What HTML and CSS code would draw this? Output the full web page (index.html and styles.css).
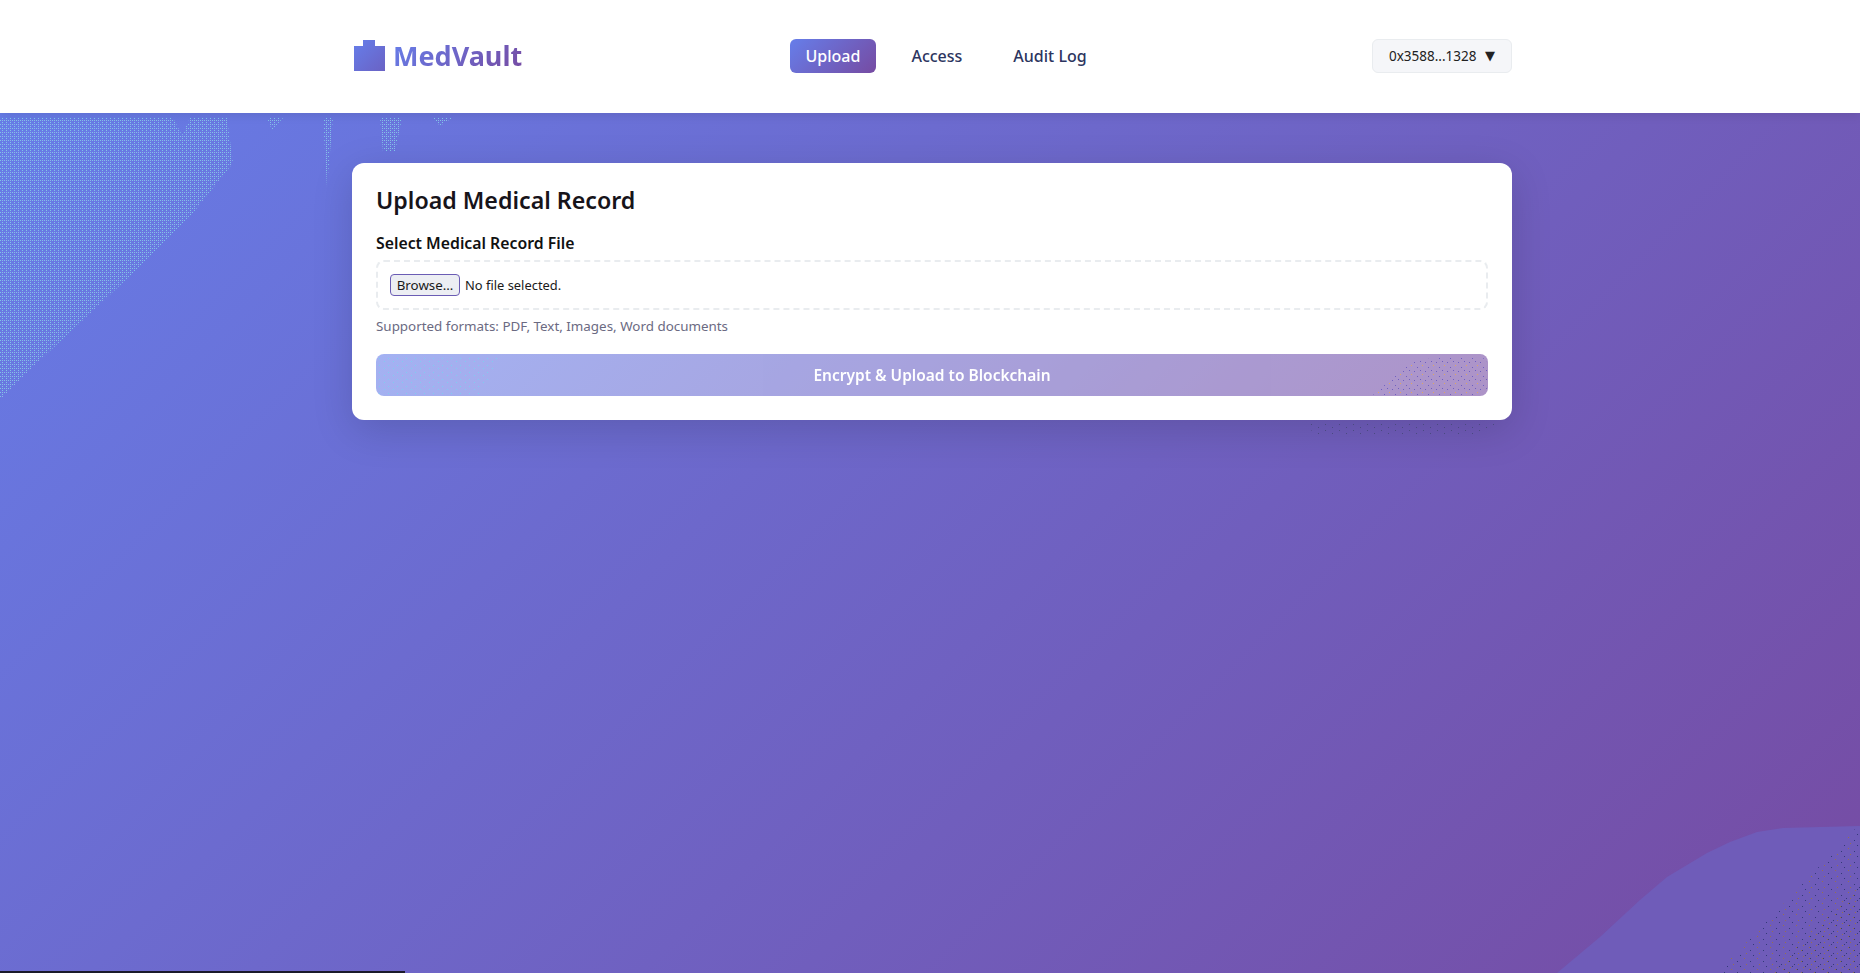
FILE: index.html
```html
<!DOCTYPE html>
<html lang="en">
<head>
    <meta charset="UTF-8">
    <title>MedVault</title>
    <link rel="stylesheet" href="styles.css">
</head>
<body>
    <header class="header">
        <div class="header_in">
            <a class="logo">
                <svg class="logo_icon" width="32" height="32" viewBox="0 0 32 32">
                    <defs>
                        <linearGradient id="logoGrad" x1="0" y1="0" x2="1" y2="1">
                            <stop offset="0" stop-color="#667eea"/>
                            <stop offset="1" stop-color="#6a62c4"/>
                        </linearGradient>
                    </defs>
                    <path d="M0 6H9V0H21V6H31V31H0Z" fill="url(#logoGrad)"/>
                </svg>
                <span class="logo_text">MedVault</span>
            </a>
            <nav class="nav">
                <a class="nav_item current">Upload</a>
                <a class="nav_item">Access</a>
                <a class="nav_item">Audit Log</a>
            </nav>
            <div class="wallet">
                <span>0x3588...1328</span>
                <span class="wallet_arrow">▼</span>
            </div>
        </div>
    </header>

    <main class="main">
        <section class="card">
            <h2 class="card_title">Upload Medical Record</h2>
            <label class="field_label">Select Medical Record File</label>
            <div class="file_box">
                <button class="browse" type="button">Browse…</button>
                <span class="file_name">No file selected.</span>
            </div>
            <p class="hint">Supported formats: PDF, Text, Images, Word documents</p>
            <button class="submit" type="button">Encrypt &amp; Upload to Blockchain</button>
        </section>
    </main>

    <!-- speckle and patches that sit over the page -->
    <svg class="speckle" width="1860" height="973" viewBox="0 0 1860 973">
        <defs>
            <pattern id="dotsCyan" width="4" height="4" patternUnits="userSpaceOnUse">
                <rect x="0" y="0" width="1" height="1" fill="#7fc4e6"/>
                <rect x="2" y="2" width="1" height="1" fill="#7fc4e6"/>
                <rect x="2" y="0" width="1" height="1" fill="#8fb4ea"/>
            </pattern>
            <pattern id="dotsPale" width="9" height="7" patternUnits="userSpaceOnUse">
                <rect x="1" y="1" width="1" height="1" fill="#7fcdf0"/>
                <rect x="6" y="4" width="1" height="1" fill="#7fcdf0"/>
            </pattern>
            <pattern id="dotsWarm" width="11" height="9" patternUnits="userSpaceOnUse">
                <rect x="1" y="1" width="1" height="1" fill="#6f5fc0"/>
                <rect x="6" y="2" width="1" height="1" fill="#6f5fc0"/>
                <rect x="3" y="5" width="1" height="1" fill="#e0a860"/>
                <rect x="9" y="7" width="1" height="1" fill="#6f5fc0"/>
            </pattern>
            <pattern id="dotsCorner" width="13" height="11" patternUnits="userSpaceOnUse">
                <rect x="2" y="1" width="1" height="1" fill="#96704f"/>
                <rect x="8" y="4" width="1" height="1" fill="#343a78"/>
                <rect x="4" y="7" width="1" height="1" fill="#96704f"/>
                <rect x="11" y="9" width="1" height="1" fill="#343a78"/>
            </pattern>
            <pattern id="dotsDark" width="14" height="6" patternUnits="userSpaceOnUse">
                <rect x="2" y="1" width="1" height="1" fill="#4a4a80"/>
                <rect x="9" y="4" width="1" height="1" fill="#4a4a80"/>
            </pattern>
        </defs>
        <path fill="url(#dotsCyan)" d="M0 118H173L182 135L190 118H227L233 163L213 188L193 213L133 273L97 307L37 363L3 397H0Z"/>
        <path fill="url(#dotsCyan)" d="M267 118H283L272 130Z"/>
        <path fill="url(#dotsCyan)" d="M323 118H333L327 187Z"/>
        <path fill="url(#dotsCyan)" d="M380 118H402L395 152H383Z"/>
        <path fill="url(#dotsCyan)" d="M433 118H452L440 126Z"/>
        <path fill="url(#dotsPale)" d="M379 356H500L480 395H379Z"/>
        <path fill="url(#dotsWarm)" d="M1373 395L1413 360L1440 358L1480 357Q1486 358 1487 364V388Q1486 394 1480 395Z"/>
        <path fill="url(#dotsDark)" d="M1300 423H1500L1480 436H1320Z"/>
        <path fill="#6f5cb9" d="M1557 973L1600 937L1640 900L1667 877L1707 853L1730 842L1757 832L1783 828L1860 826V973Z"/>
        <path fill="url(#dotsCorner)" d="M1717 973L1857 827H1860V973Z"/>
        <path fill="url(#dotsCorner)" transform="translate(5 3)" d="M1767 970L1855 880V970Z"/>
        <rect x="0" y="971" width="405" height="2" fill="#1a1a2a"/>
    </svg>
</body>
</html>
```

FILE: styles.css
```css
* {
    margin: 0;
    padding: 0;
    box-sizing: border-box;
}
html, body {
    height: 100%;
    overflow: hidden;
}
body {
    position: relative;
    font-family: "Noto Sans", "Open Sans", sans-serif;
    background: linear-gradient(135deg, #667eea 0%, #764ba2 100%);
    color: #1a1a1a;
}
.header {
    position: relative;
    height: 113px;
    padding-bottom: 2px;
    background-color: #fff;
    box-shadow: 0 2px 10px rgba(0, 0, 0, .1);
}
.header_in {
    width: 1160px;
    height: 100%;
    margin-left: 352px;
    display: flex;
    align-items: center;
    justify-content: space-between;
}
.logo {
    display: flex;
    align-items: center;
    gap: 7px;
    padding-left: 2px;
}
.logo_icon {
    display: block;
}
.logo_text {
    font-size: 27px;
    font-weight: 700;
    line-height: 32px;
    background: linear-gradient(135deg, #667eea 0%, #764ba2 100%);
    -webkit-background-clip: text;
    background-clip: text;
    color: transparent;
}
.nav {
    display: flex;
    gap: 19px;
    margin-right: 2px;
}
.nav_item {
    height: 34px;
    line-height: 34px;
    padding: 0 16px;
    border-radius: 6px;
    font-size: 16px;
    font-weight: 500;
    color: #2c3560;
}
.nav_item.current {
    color: #fff;
    background: linear-gradient(135deg, #667eea 0%, #764ba2 100%);
}
.wallet {
    display: flex;
    align-items: center;
    justify-content: space-between;
    width: 140px;
    height: 34px;
    padding: 0 16px;
    background-color: #f5f6f9;
    border: 1px solid #e9ecef;
    border-radius: 6px;
    font-size: 13.5px;
    color: #222;
}
.wallet_arrow {
    font-family: "DejaVu Sans", sans-serif;
    font-size: 13px;
}
.main {
    width: 1160px;
    margin: 50px 0 0 352px;
}
.card {
    height: 257px;
    padding: 22px 24px 24px;
    background-color: #fff;
    border-radius: 12px;
    box-shadow: 0 10px 40px rgba(0, 0, 0, .15);
}
.card_title {
    font-size: 23.2px;
    font-weight: 600;
    line-height: 30px;
    color: #17141a;
    margin-bottom: 17px;
}
.field_label {
    display: block;
    font-size: 15.8px;
    font-weight: 600;
    line-height: 22px;
    color: #111;
    margin-bottom: 6px;
}
.file_box {
    display: flex;
    align-items: center;
    height: 50px;
    padding: 0 12px;
    border: 2px dashed #e9ecef;
    border-radius: 8px;
}
.browse {
    width: 70px;
    height: 22px;
    font-family: inherit;
    font-size: 13.33px;
    line-height: 18px;
    color: #1a1a1a;
    background-color: #eceef3;
    border: 1px solid #6a5cb4;
    border-radius: 4px;
}
.file_name {
    margin-left: 5px;
    font-size: 12.9px;
    color: #1a1a1a;
}
.hint {
    margin-top: 6px;
    font-size: 13.4px;
    line-height: 20px;
    color: #6b6a82;
}
.submit {
    display: block;
    width: 100%;
    height: 42px;
    margin-top: 18px;
    font-family: inherit;
    font-size: 15.5px;
    font-weight: 600;
    color: #fff;
    background: linear-gradient(135deg, #667eea 0%, #764ba2 100%);
    border: 0;
    border-radius: 8px;
    opacity: .6;
}
.speckle {
    position: absolute;
    top: 0;
    left: 0;
    pointer-events: none;
}
```
